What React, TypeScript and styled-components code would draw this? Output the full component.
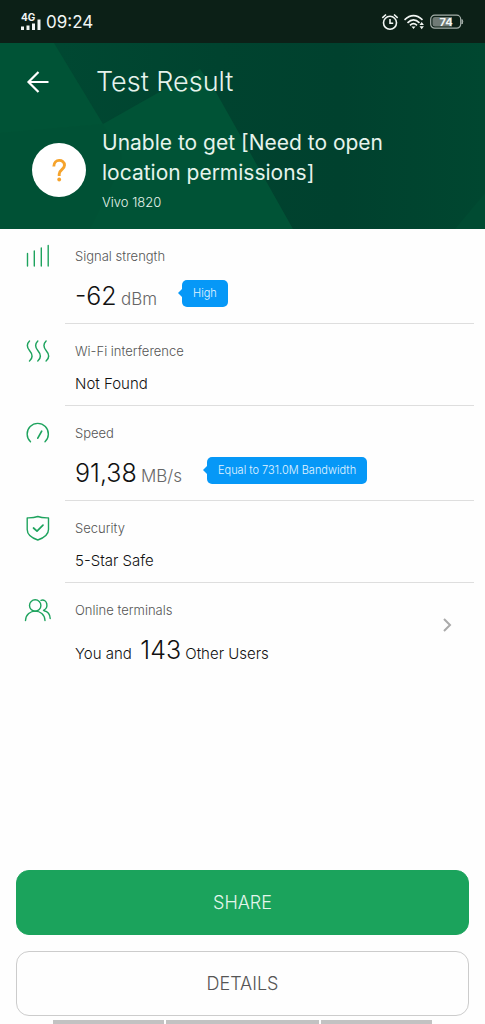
import React from 'react';
import styled, { createGlobalStyle } from 'styled-components';

const GlobalStyle = createGlobalStyle`
  *, *::before, *::after { box-sizing: border-box; }
  body {
    margin: 0;
    background: #fefefe;
    color: #111;
    font-family: Inter, "Liberation Sans", sans-serif;
    font-weight: 300;
  }
  h1, h2, p { margin: 0; font-weight: inherit; }
`;

const Screen = styled.div`
  min-height: 100vh;
  display: flex;
  flex-direction: column;
`;

const StatusBar = styled.div`
  height: 43px;
  padding: 0 21px;
  display: flex;
  align-items: center;
  justify-content: space-between;
  background: #0c2017;
  color: #f2f6f4;
`;

const StatusGroup = styled.div`
  display: flex;
  align-items: center;
  gap: 5px;
`;

const Carrier = styled.div`
  display: flex;
  flex-direction: column;
  font-size: 10px;
  line-height: 8px;
  font-weight: 700;
`;

const Clock = styled.time`
  font-size: 17px;
  line-height: 24px;
  font-weight: 400;
`;

const Header = styled.header`
  position: relative;
  height: 186px;
  background: #00472f;
  color: #e6f3ec;
`;

const Facets = styled.svg`
  position: absolute;
  inset: 0;
  width: 100%;
  height: 100%;
`;

const TitleBar = styled.div`
  position: relative;
  display: flex;
  align-items: center;
  height: 77px;
  padding-left: 24px;
  gap: 44px;
`;

const BackButton = styled.button`
  width: 28px;
  height: 28px;
  padding: 0;
  border: 0;
  background: none;
  color: #fff;
  cursor: pointer;
`;

const Title = styled.h1`
  font-size: 27px;
  line-height: 32px;
`;

const NetworkInfo = styled.div`
  position: relative;
  display: flex;
  align-items: center;
  gap: 16px;
  padding: 8px 32px 0;
`;

const Avatar = styled.div`
  flex: none;
  width: 54px;
  height: 54px;
  border-radius: 50%;
  background: #fff;
`;

const Ssid = styled.h2`
  max-width: 320px;
  font-size: 21px;
  line-height: 30px;
  font-weight: 400;
`;

const Device = styled.p`
  padding-top: 4px;
  font-size: 13px;
  line-height: 20px;
`;

const Row = styled.section`
  display: flex;
  padding-right: 11px;
`;

const IconCell = styled.div`
  flex: none;
  width: 65px;
  padding: 13px 0 0 24px;
  color: #1ea35e;
`;

const Detail = styled.div<{ $tall?: boolean; $last?: boolean }>`
  flex: 1;
  display: flex;
  flex-direction: column;
  gap: ${p => (p.$tall ? 14 : 11)}px;
  padding: 17px 0 ${p => (p.$last ? 0 : p.$tall ? 11 : 9)}px 10px;
  border-bottom: ${p => (p.$last ? 0 : 1)}px solid #dedede;
`;

const Label = styled.h2`
  font-size: 13px;
  line-height: 20px;
  color: #555;
`;

const Value = styled.p`
  font-size: 15px;
  line-height: 24px;
`;

const Reading = styled.div`
  display: flex;
  align-items: flex-start;
  gap: 25px;
`;

const Figure = styled.p`
  font-size: 15px;
  line-height: 20px;
`;

const Big = styled.span`
  font-size: 25px;
  line-height: 32px;
`;

const Unit = styled.span`
  font-size: 17px;
  color: #666;
`;

const Bubble = styled.span`
  position: relative;
  padding: 0 11px;
  border-radius: 5px;
  background: #0698f7;
  color: #e2f4ff;
  font-size: 11px;
  line-height: 27px;

  &::before {
    content: "";
    position: absolute;
    left: -4px;
    top: 9px;
    border: 4px solid transparent;
    border-left: 0;
    border-right-color: #0698f7;
  }
`;

const OpenButton = styled.button`
  align-self: center;
  width: 30px;
  height: 30px;
  margin-right: 12px;
  padding: 0;
  border: 0;
  background: none;
  color: #aaa;
  cursor: pointer;
`;

const Actions = styled.footer`
  margin-top: auto;
  padding: 0 16px 4px;
  display: flex;
  flex-direction: column;
  gap: 16px;
`;

const ActionButton = styled.button<{ $primary?: boolean }>`
  height: 65px;
  border: 1px solid ${p => (p.$primary ? '#1ba35c' : '#ccc')};
  border-radius: 13px;
  background: ${p => (p.$primary ? '#1ba35c' : '#fefefe')};
  color: ${p => (p.$primary ? '#e4f6ec' : '#555')};
  font: inherit;
  font-size: 18px;
  cursor: pointer;
`;

const NavHints = styled.div`
  display: grid;
  grid-template-columns: 110fr 153fr 110fr;
  gap: 2px;
  padding: 0 11%;
`;

const Hint = styled.span`
  height: 4px;
  background: #c2c2c2;
`;

const LineIcon = ({ children }: { children: React.ReactNode }) => (
  <svg width="28" height="28" viewBox="0 0 28 28" fill="none" stroke="currentColor" strokeWidth="1.4" strokeLinecap="round" strokeLinejoin="round" aria-hidden="true">
    {children}
  </svg>
);

export default function App() {
  return (
    <Screen>
      <GlobalStyle />
      <StatusBar>
        <StatusGroup>
          <Carrier>
            <span>4G</span>
            <svg width="20" height="10" viewBox="0 0 20 10" fill="currentColor" overflow="visible" aria-hidden="true">
              <path d="M0 5.500h3v3.500H0zM5.500 4.500h3v4.500h-3zM11 2.500h3v6.500h-3zM16.500 -1.500h3v10.500h-3z" />
            </svg>
          </Carrier>
          <Clock>09:24</Clock>
        </StatusGroup>
        <StatusGroup>
          <svg width="18" height="18" viewBox="0 0 18 18" fill="none" stroke="currentColor" strokeWidth="1.6" aria-hidden="true">
            <circle cx="9" cy="9.800" r="6.500" />
            <path d="M9 6V10.300H12.200M1.300 4.800L5 1.500M16.700 4.800L13 1.500" />
          </svg>
          <svg width="21" height="18" viewBox="0 0 21 18" fill="none" stroke="currentColor" strokeWidth="1.600" aria-hidden="true">
            <path d="M.5 6.800Q9.500 -1.500 18.500 6.800M3.500 9.800Q9.500 4 15.500 9.800M6 12.300Q9.500 9 13 12.300" />
            <path d="M7.500 13.500h4L9.500 16zM15.500 12l2.200-3 2.200 3zM15.500 13.300h4.400L17.700 16.300z" fill="currentColor" stroke="none" />
          </svg>
          <svg width="34" height="16" viewBox="0 0 34 16" aria-label="Battery 74%">
            <rect x=".7" y="1.200" width="30" height="13" rx="4" fill="none" stroke="#a5afaa" strokeWidth="1.200" />
            <path d="M5 3h17v9.500H5q-2.500 0-2.500-2.500V5.500Q2.500 3 5 3z" fill="#6f7a75" />
            <path d="M32 5.500q1.500 2.200 0 4.500z" fill="#a5afaa" stroke="#a5afaa" />
            <text x="16" y="12" textAnchor="middle" fontSize="11" fontWeight="700" fill="#f2f6f4">74</text>
          </svg>
        </StatusGroup>
      </StatusBar>

      <Header>
        <Facets viewBox="0 0 485 186" preserveAspectRatio="none" aria-hidden="true">
          <defs>
            <linearGradient id="shade" x1="0" x2="1" y1="0" y2="0">
              <stop offset="0" stopColor="#004a33" />
              <stop offset=".45" stopColor="#00432f" />
              <stop offset=".7" stopColor="#00412e" />
              <stop offset="1" stopColor="#004730" />
            </linearGradient>
          </defs>
          <path d="M0 0h485v186H0z" fill="url(#shade)" />
          <path d="M0 0H54L103 81L200 26L217 51L293 186H0z" fill="#005336" />
          <path d="M103 81L122 112L118 130L90 186H0V90z" fill="#004f34" opacity=".4" />
          <path d="M485 150V186H455z" fill="#004b32" />
        </Facets>
        <TitleBar>
          <BackButton aria-label="Back">
            <svg width="28" height="28" viewBox="0 0 28 28" fill="none" stroke="currentColor" strokeWidth="2.200" aria-hidden="true">
              <path d="M24.500 14H4.500M14.500 4L4.500 14L14.500 24" />
            </svg>
          </BackButton>
          <Title>Test Result</Title>
        </TitleBar>
        <NetworkInfo>
          <Avatar>
            <svg width="54" height="54" viewBox="0 0 54 54" fill="none" stroke="#f5a32c" strokeWidth="2.900" aria-hidden="true">
              <path d="M21.800 23.500C21.800 15.500 32.500 15.700 32.500 22.200C32.500 26.500 27.200 26.800 27.200 31V33" />
              <circle cx="27.200" cy="36.500" r="1.900" fill="#f5a32c" stroke="none" />
            </svg>
          </Avatar>
          <div>
            <Ssid>Unable to get [Need to open location permissions]</Ssid>
            <Device>Vivo 1820</Device>
          </div>
        </NetworkInfo>
      </Header>

      <main>
        <Row>
          <IconCell><LineIcon><path d="M3.500 11.500v12.500M10.300 9v15M17.300 6v18M24.200 3.500v20.500" /></LineIcon></IconCell>
          <Detail $tall>
            <Label>Signal strength</Label>
            <Reading>
              <Figure><Big>-62</Big> <Unit>dBm</Unit></Figure>
              <Bubble>High</Bubble>
            </Reading>
          </Detail>
        </Row>
        <Row>
          <IconCell>
            <LineIcon>
              <path d="M5.500 4C2 7.500 3 10.500 5.500 13.500C8.500 17 9.500 20.500 5.500 24M13.800 4C10.300 7.500 11.300 10.500 13.800 13.500C16.800 17 17.800 20.500 13.800 24M22.100 4C18.600 7.500 19.600 10.500 22.100 13.500C25.100 17 26.100 20.500 22.100 24" />
            </LineIcon>
          </IconCell>
          <Detail>
            <Label>Wi-Fi interference</Label>
            <Value>Not Found</Value>
          </Detail>
        </Row>
        <Row>
          <IconCell>
            <LineIcon>
              <path d="M6.500 22.700A10.600 10.600 0 1 1 21 22.700" />
              <path d="M13.800 19.200L17.700 12.200" strokeWidth="1.700" />
            </LineIcon>
          </IconCell>
          <Detail $tall>
            <Label>Speed</Label>
            <Reading>
              <Figure><Big>91,38</Big> <Unit>MB/s</Unit></Figure>
              <Bubble>Equal to 731.0M Bandwidth</Bubble>
            </Reading>
          </Detail>
        </Row>
        <Row>
          <IconCell>
            <LineIcon>
              <path d="M13.800 2.500C17 3.800 21 4 24.500 3.900V15.500C24.500 21 19 24.200 13.800 26C8.500 24.200 3.200 21 3.200 15.500V3.900C6.500 4 10.500 3.800 13.800 2.500z" />
              <path d="M9.500 14L13 17.200L19 11.200" strokeWidth="1.700" />
            </LineIcon>
          </IconCell>
          <Detail>
            <Label>Security</Label>
            <Value>5-Star Safe</Value>
          </Detail>
        </Row>
        <Row>
          <IconCell>
            <LineIcon>
              <circle cx="11.200" cy="9.500" r="5.700" />
              <path d="M1.500 24.500C2 12 20.500 12 21 24.500M17 4.300C23.500 2.500 25 12 19.500 14.300M20 14.700C24 15.500 26 18.500 26.200 22.500" />
            </LineIcon>
          </IconCell>
          <Detail $tall $last>
            <Label>Online terminals</Label>
            <Figure>You and&nbsp; <Big>143</Big> Other Users</Figure>
          </Detail>
          <OpenButton aria-label="Show online terminals">
            <svg width="30" height="30" viewBox="0 0 30 30" fill="none" stroke="currentColor" strokeWidth="2" aria-hidden="true">
              <path d="M12 9L18 15L12 21" />
            </svg>
          </OpenButton>
        </Row>
      </main>

      <Actions>
        <ActionButton $primary>SHARE</ActionButton>
        <ActionButton>DETAILS</ActionButton>
      </Actions>
      <NavHints>
        <Hint /><Hint /><Hint />
      </NavHints>
    </Screen>
  );
}
